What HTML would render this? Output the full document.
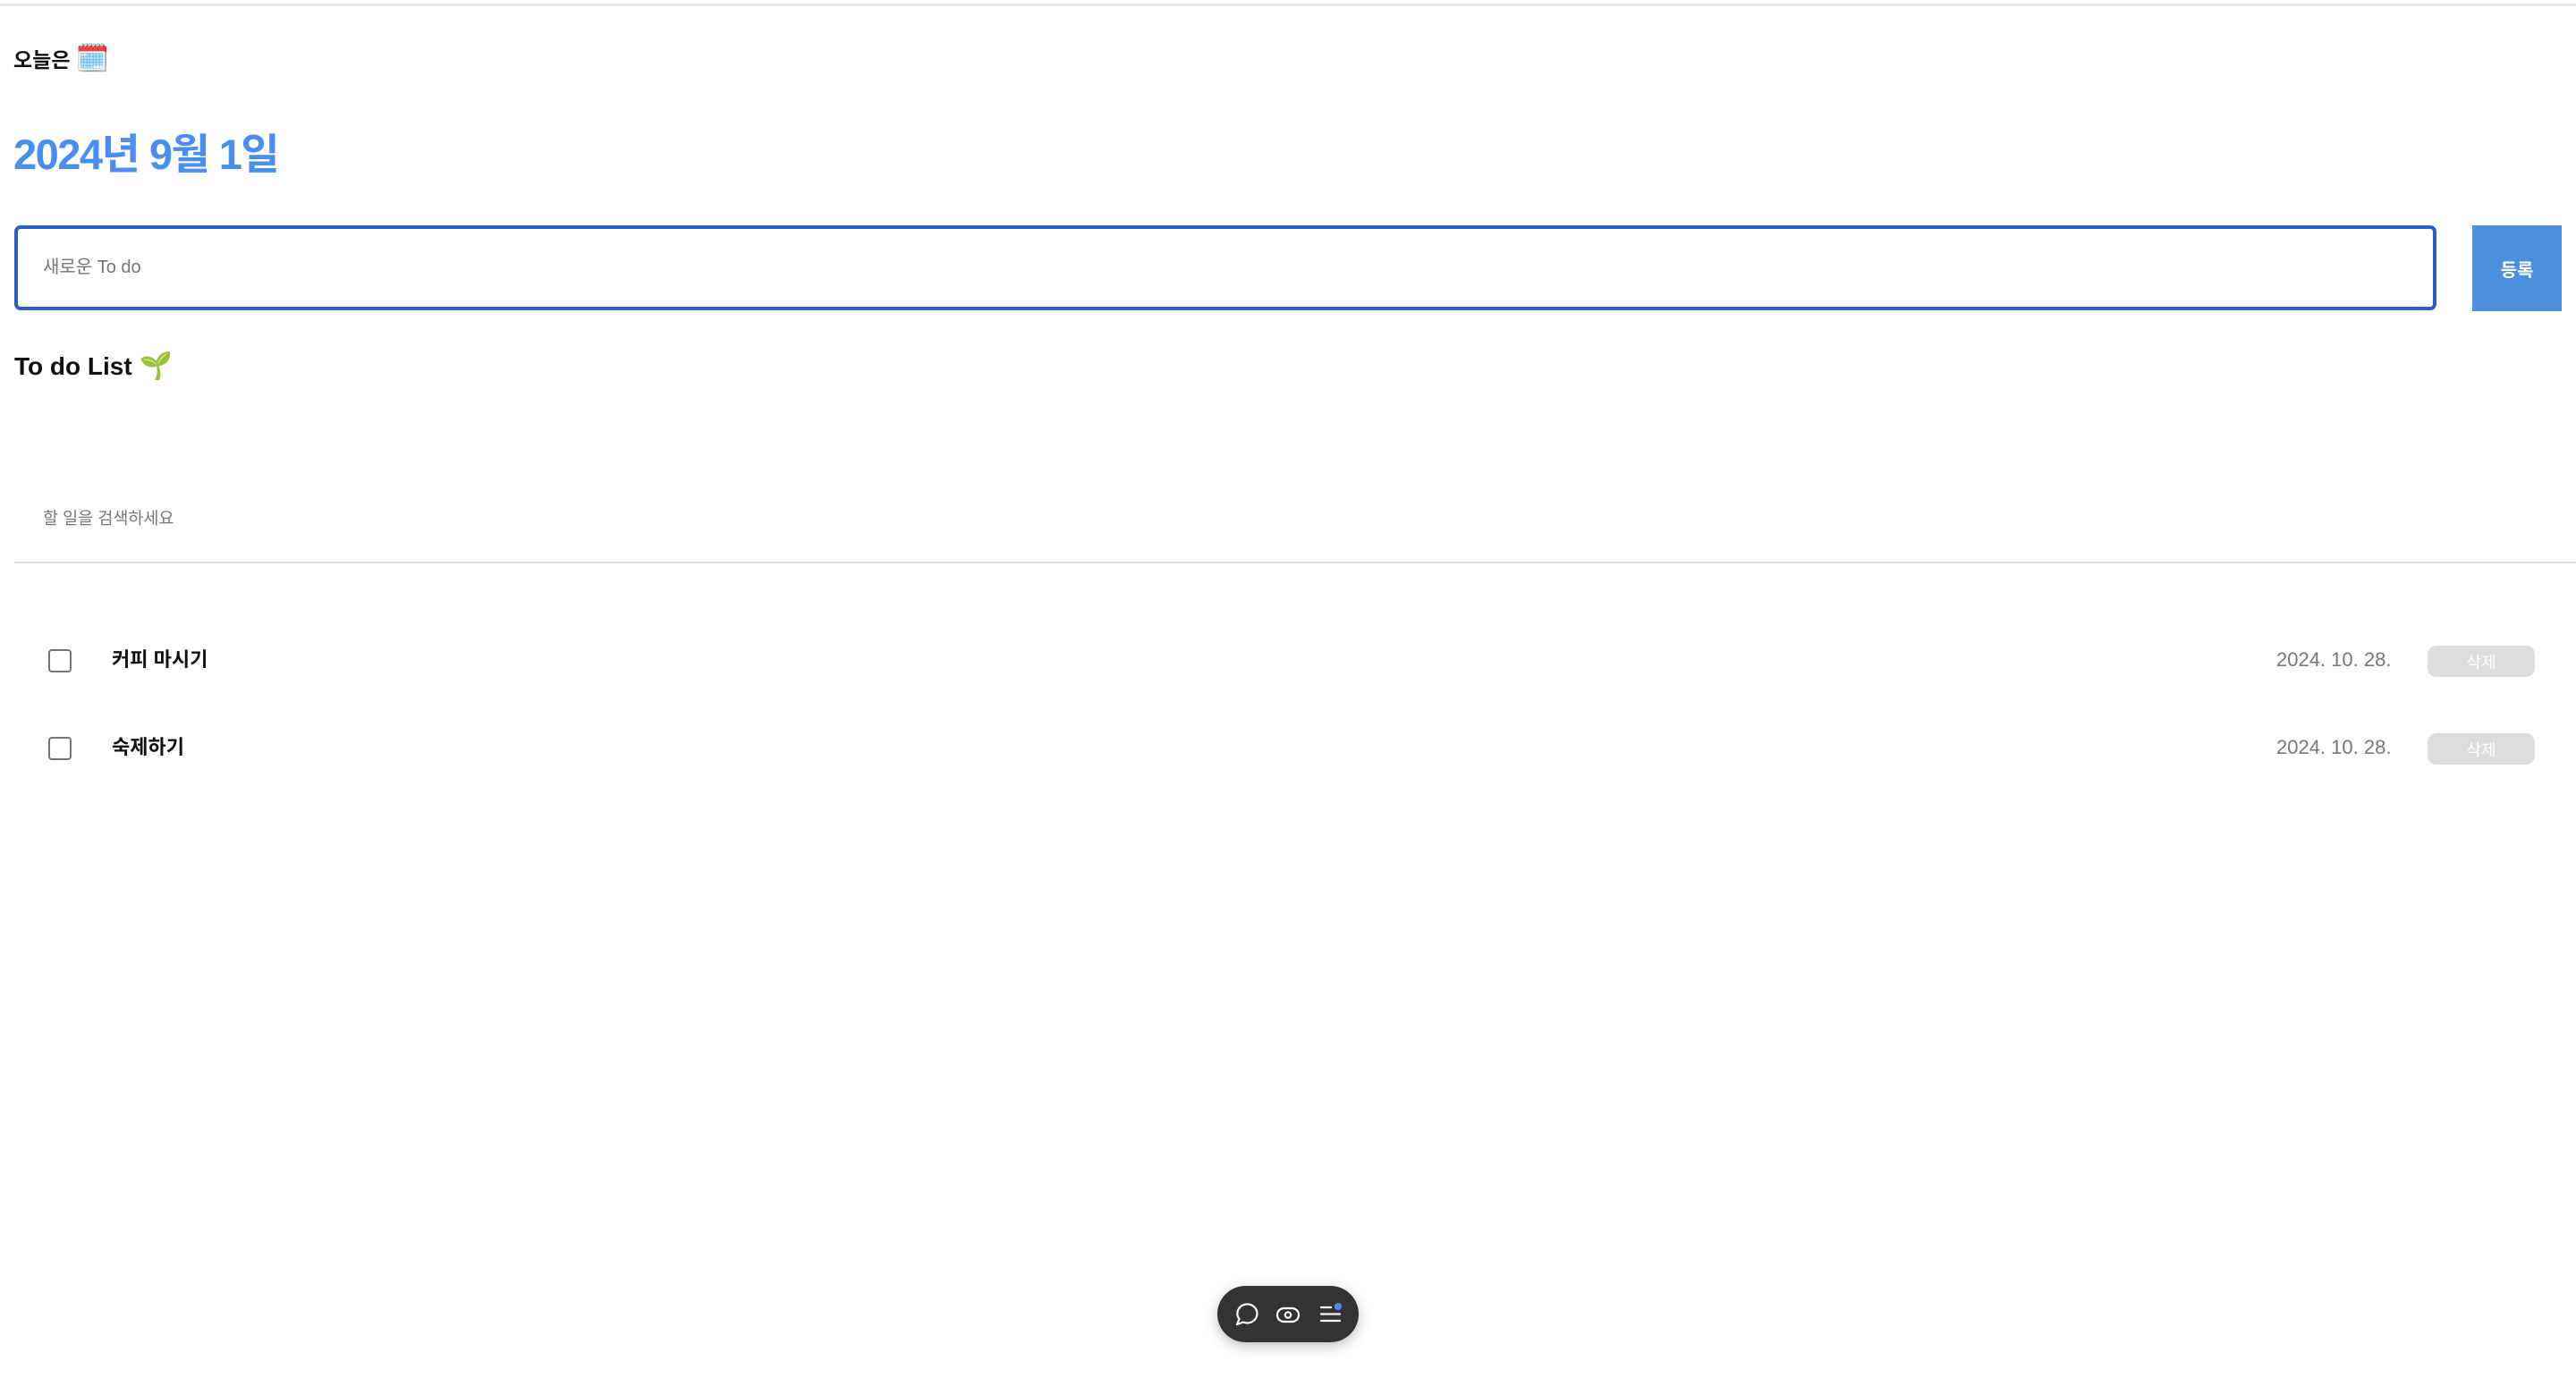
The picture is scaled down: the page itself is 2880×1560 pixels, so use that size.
<!DOCTYPE html>
<html><head><meta charset="utf-8"><style>
*{margin:0;padding:0;box-sizing:border-box}
html,body{width:2880px;height:1560px;background:#fff;overflow:hidden;font-family:"Liberation Sans","Noto Sans CJK KR",sans-serif;position:relative}
.a{position:absolute;white-space:nowrap}
</style></head><body>
<div class="a" style="left:0;top:4px;width:2880px;height:3px;background:#e4e4e4"></div>
<div class="a" style="left:15px;top:46px;font-size:23px;font-weight:bold;color:#111;line-height:40px">오늘은 <span style="font-size:30px">🗓️</span></div>
<div class="a" style="left:15px;top:138px;font-size:47px;font-weight:bold;color:#4a8ef0;line-height:70px;letter-spacing:-1.5px">2024년 9월 1일</div>
<div class="a" style="left:16px;top:252px;width:2708px;height:95px;border:4px solid #2a5fc8;border-radius:7px"></div>
<div class="a" style="left:48px;top:285px;font-size:20px;color:#777;line-height:28px">새로운 To do</div>
<div class="a" style="left:2764px;top:252px;width:100px;height:96px;background:#4a90dc;color:#fff;font-size:20px;font-weight:bold;display:flex;align-items:center;justify-content:center">등록</div>
<div class="a" style="left:16px;top:390px;font-size:28px;font-weight:bold;color:#111;line-height:40px">To do List <span style="font-size:30px">🌱</span></div>
<div class="a" style="left:48px;top:566px;font-size:18.5px;color:#777;line-height:28px">할 일을 검색하세요</div>
<div class="a" style="left:16px;top:628px;width:2864px;height:2px;background:#dcdcdc"></div>

<div class="a" style="left:54px;top:726px;width:26px;height:26px;border:2px solid #767676;border-radius:4px"></div>
<div class="a" style="left:125px;top:723px;font-size:22px;font-weight:bold;color:#111;line-height:30px">커피 마시기</div>
<div class="a" style="left:2545px;top:723px;font-size:22px;color:#777;line-height:30px">2024. 10. 28.</div>
<div class="a" style="left:2714px;top:722px;width:120px;height:35px;background:#dcdcdc;border-radius:10px;color:#fff;font-size:18px;display:flex;align-items:center;justify-content:center">삭제</div>

<div class="a" style="left:54px;top:824px;width:26px;height:26px;border:2px solid #767676;border-radius:4px"></div>
<div class="a" style="left:125px;top:821px;font-size:22px;font-weight:bold;color:#111;line-height:30px">숙제하기</div>
<div class="a" style="left:2545px;top:821px;font-size:22px;color:#777;line-height:30px">2024. 10. 28.</div>
<div class="a" style="left:2714px;top:820px;width:120px;height:35px;background:#dcdcdc;border-radius:10px;color:#fff;font-size:18px;display:flex;align-items:center;justify-content:center">삭제</div>

<div class="a" style="left:1361px;top:1438px;width:158px;height:63px;background:#333;border-radius:32px;box-shadow:0 4px 14px rgba(0,0,0,0.25)">
<svg class="a" style="left:0;top:0" width="158" height="63" viewBox="0 0 158 63" fill="none" stroke="#fff" stroke-width="2.2" stroke-linecap="round" stroke-linejoin="round">
<path d="M22 43 L24.5 37 A11 10.5 0 1 1 29 40.5 Z"/>
<rect x="67" y="25" width="24" height="15" rx="7.5"/>
<circle cx="79" cy="32.5" r="3.2"/>
<path d="M116 24h11M116 31.5h21M116 39h21"/>
<circle cx="135" cy="23" r="4" fill="#4a90f0" stroke="none"/>
</svg></div>
</body></html>
